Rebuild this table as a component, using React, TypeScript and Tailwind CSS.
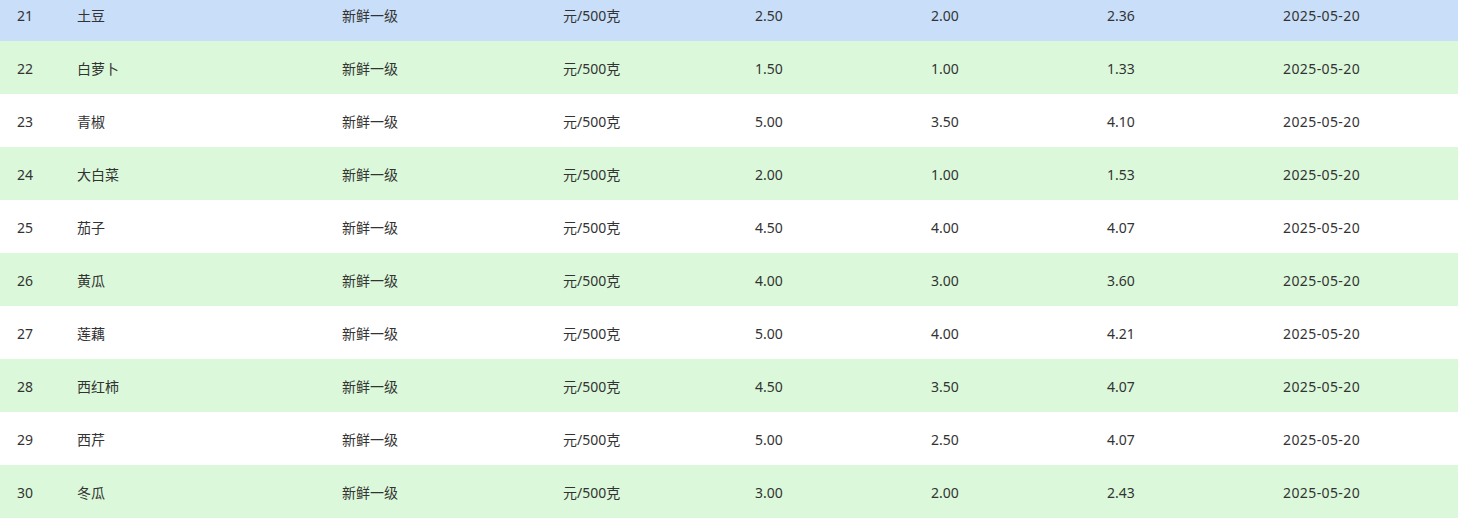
import React from "react";

const rows = [
  ["21", "土豆", "2.50", "2.00", "2.36"],
  ["22", "白萝卜", "1.50", "1.00", "1.33"],
  ["23", "青椒", "5.00", "3.50", "4.10"],
  ["24", "大白菜", "2.00", "1.00", "1.53"],
  ["25", "茄子", "4.50", "4.00", "4.07"],
  ["26", "黄瓜", "4.00", "3.00", "3.60"],
  ["27", "莲藕", "5.00", "4.00", "4.21"],
  ["28", "西红柿", "4.50", "3.50", "4.07"],
  ["29", "西芹", "5.00", "2.50", "4.07"],
  ["30", "冬瓜", "3.00", "2.00", "2.43"],
];

export default function App() {
  return (
    <div
      className="w-[1458px] h-[521px] overflow-hidden bg-white text-[14px] text-[#333]"
      style={{ fontFamily: '"Noto Sans", "Noto Sans CJK SC", sans-serif' }}
    >
      <div className="mt-[-12px]">
        {rows.map((r, i) => {
          const bg = i === 0 ? "bg-[#c9dff9]" : i % 2 === 1 ? "bg-[#dbf9da]" : "bg-white";
          const cells = [r[0], r[1], "新鲜一级", "元/500克", r[2], r[3], r[4]];
          return (
            <div
              key={r[0]}
              className={`grid grid-cols-[60px_265px_221px_192px_176px_176px_176px_1fr] h-[53px] items-center pt-[2px] ${bg}`}
            >
              {cells.map((c, j) => (
                <div key={j} className="pl-[17px] leading-none whitespace-nowrap">
                  {c}
                </div>
              ))}
              <div className="pl-[17px] leading-none whitespace-nowrap tracking-[0.4px]">2025-05-20</div>
            </div>
          );
        })}
      </div>
    </div>
  );
}
